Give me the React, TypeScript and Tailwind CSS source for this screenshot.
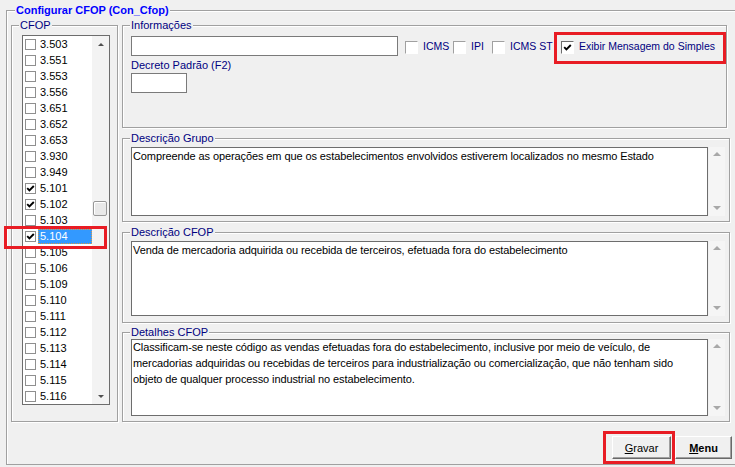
import React from 'react';

const cfops = [
  '3.503', '3.551', '3.553', '3.556', '3.651', '3.652', '3.653', '3.930', '3.949', '5.101', '5.102', '5.103',
  '5.104', '5.105', '5.106', '5.109', '5.110', '5.111', '5.112', '5.113', '5.114', '5.115', '5.116',
];
const marcados = ['5.101', '5.102', '5.104'];
const selecionado = '5.104';

function Check() {
  return (
    <svg viewBox="0 0 9 9" className="h-[9px] w-[9px]">
      <path d="M1.2 4.2 L3.4 6.4 L7.8 2" stroke="#000" strokeWidth="1.9" fill="none" />
    </svg>
  );
}

function Group({ label, className, children }: { label: string; className: string; children?: React.ReactNode }) {
  return (
    <div className={`relative border border-[#a0a0a0] shadow-[inset_1px_1px_0_#fff,1px_1px_0_#fff] ${className}`}>
      <span className="absolute -top-[8px] left-[7px] bg-[#f0f0f0] px-[1px] text-[#000080]">{label}</span>
      {children}
    </div>
  );
}

function WinBox({ checked }: { checked?: boolean }) {
  return (
    <span
      className={`mt-[5px] flex h-[13px] w-[13px] shrink-0 items-center justify-center border border-b-white border-r-white bg-white ${
        checked ? 'border-l-[#6d6d6d] border-t-[#6d6d6d]' : 'border-l-[#a0a0a0] border-t-[#a0a0a0]'
      }`}
    >
      {checked && <Check />}
    </span>
  );
}

function Memo({ h, children }: { h: string; children?: React.ReactNode }) {
  return (
    <div className={`flex ${h}`}>
      <div className="w-[577px] overflow-hidden border border-[#6d6d6d] bg-white pl-[1px] pt-[1px] tracking-[-0.1px]">
        {children}
      </div>
      <div className="ml-[1px] flex w-[16px] flex-col items-center justify-between bg-[#f5f5f5] pb-[6px] pt-[5px]">
        <span className="h-0 w-0 border-x-[4px] border-b-[4px] border-x-transparent border-b-[#a8a8a8]" />
        <span className="h-0 w-0 border-x-[4px] border-t-[4px] border-x-transparent border-t-[#a8a8a8]" />
      </div>
    </div>
  );
}

function Lista() {
  return (
    <div className="flex h-[370px] w-[88px] border border-[#6d6d6d] bg-white">
      <div className="w-[69px]">
        {cfops.map((c) => {
          const sel = c === selecionado;
          return (
            <div key={c} className="flex h-[16px] items-center pl-[2px]">
              <span className="flex h-[11px] w-[11px] shrink-0 items-center justify-center border border-[#8f8f8f] bg-white">
                {marcados.includes(c) && <Check />}
              </span>
              <span
                className={`ml-[2px] flex h-[15px] flex-1 items-center border pl-[1px] ${
                  sel ? 'border-dotted border-[#d89a48] bg-[#3399ff] text-white' : 'border-transparent'
                }`}
              >
                {c}
              </span>
            </div>
          );
        })}
      </div>
      <div className="flex w-[17px] flex-col bg-[#f3f3f3]">
        <div className="flex h-[16px] items-center justify-center">
          <span className="h-0 w-0 border-x-[3px] border-b-[3px] border-x-transparent border-b-[#505050]" />
        </div>
        <div className="ml-[1px] mt-[149px] h-[15px] w-[14px] rounded-[2px] border border-[#979797] bg-[#e8e8e8] shadow-[inset_1px_1px_0_#fff]" />
        <div className="flex-1" />
        <div className="flex h-[16px] items-center justify-center">
          <span className="h-0 w-0 border-x-[3px] border-t-[3px] border-x-transparent border-t-[#505050]" />
        </div>
      </div>
    </div>
  );
}

export default function App() {
  return (
    <div className="relative h-[467px] w-[735px] overflow-hidden bg-[#f0f0f0] pl-[6px] pt-[10px] font-['Liberation_Sans',Arial,sans-serif] text-[11px] leading-[14px] text-black">
      <div className="relative flex h-[455px] w-[735px] flex-col border border-[#a0a0a0] pl-[4px] pr-[10px] pt-[14px] shadow-[inset_1px_1px_0_#fff]">
        <span className="absolute -top-[8px] left-[8px] bg-[#f0f0f0] px-[1px] font-bold text-[#0000ff]">
          Configurar CFOP (Con_Cfop)
        </span>

        <div className="flex gap-[4px]">
          <Group label="CFOP" className="h-[397px] w-[107px] pl-[10px] pt-[9px]">
            <Lista />
          </Group>

          <div className="flex w-[608px] flex-col">
            <Group label="Informações" className="h-[103px] w-[605px] pl-[8px] pt-[10px]">
              <div className="flex items-start text-[10.5px]">
                <div className="h-[20px] w-[267px] border border-[#7a7a7a] bg-white" />
                <span className="ml-[7px]" />
                <WinBox />
                <span className="ml-[5px] mt-[3px] w-[30px] text-[#000080]">ICMS</span>
                <WinBox />
                <span className="ml-[5px] mt-[3px] w-[21px] text-[#000080]">IPI</span>
                <WinBox />
                <span className="ml-[5px] mt-[3px] w-[51px] whitespace-nowrap text-[#000080]">ICMS ST</span>
                <WinBox checked />
                <span className="ml-[5px] mt-[3px] whitespace-nowrap text-[#000080]">Exibir Mensagem do Simples</span>
              </div>
              <div className="mt-[2px] text-[#000080]">Decreto Padrão (F2)</div>
              <div className="mt-[1px] h-[20px] w-[56px] border border-[#7a7a7a] bg-white" />
            </Group>

            <Group label="Descrição Grupo" className="mt-[10px] h-[84px] pl-[8px] pt-[8px]">
              <Memo h="h-[69px]">
                Compreende as operações em que os estabelecimentos envolvidos estiverem localizados no mesmo Estado
              </Memo>
            </Group>

            <Group label="Descrição CFOP" className="mt-[10px] h-[91px] pl-[8px] pt-[8px]">
              <Memo h="h-[75px]">Venda de mercadoria adquirida ou recebida de terceiros, efetuada fora do estabelecimento</Memo>
            </Group>

            <Group label="Detalhes CFOP" className="mt-[9px] h-[90px] pl-[8px] pt-[6px]">
              <Memo h="h-[77px]">
                <div className="-mt-[2px] leading-[16px]">
                  Classificam-se neste código as vendas efetuadas fora do estabelecimento, inclusive por meio de veículo, de
                  <br />
                  mercadorias adquiridas ou recebidas de terceiros para industrialização ou comercialização, que não tenham sido
                  <br />
                  objeto de qualquer processo industrial no estabelecimento.
                </div>
              </Memo>
            </Group>
          </div>
        </div>

        <div className="-mr-[2px] mt-[14px] flex justify-end gap-[4px]">
          <button className="h-[23px] w-[59px] border border-b-[#696969] border-l-white border-r-[#696969] border-t-white bg-[#f0f0f0] shadow-[inset_-1px_-1px_0_#a0a0a0]">
            <span className="underline">G</span>ravar
          </button>
          <button className="h-[23px] w-[57px] border border-b-[#696969] border-l-white border-r-[#696969] border-t-white bg-[#f0f0f0] font-bold shadow-[inset_-1px_-1px_0_#a0a0a0]">
            <span className="underline">M</span>enu
          </button>
        </div>
      </div>

      <div className="pointer-events-none absolute left-[4px] top-[226px] h-[23px] w-[103px] border-[3px] border-[#e81c24]" />
      <div className="pointer-events-none absolute left-[554px] top-[32px] h-[32px] w-[172px] border-[3px] border-[#e81c24]" />
      <div className="pointer-events-none absolute left-[603px] top-[431px] h-[33px] w-[72px] border-[3px] border-[#e81c24]" />
    </div>
  );
}
